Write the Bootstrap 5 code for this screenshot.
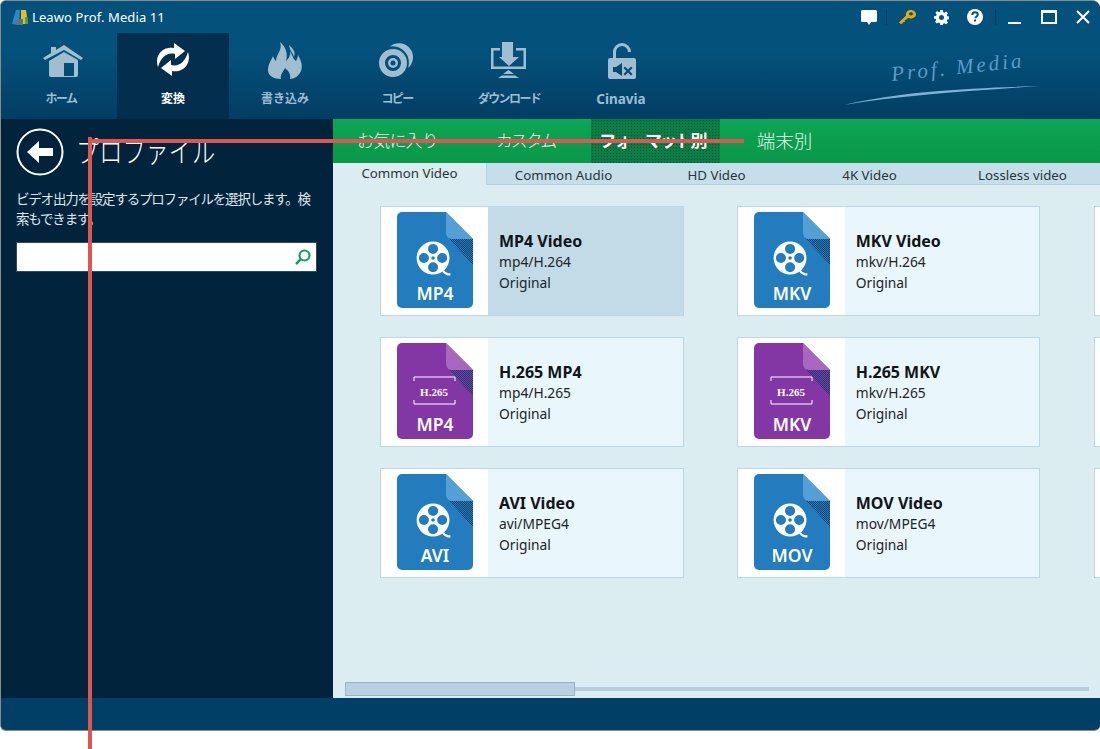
<!DOCTYPE html>
<html lang="ja">
<head>
  <meta charset="UTF-8">
  <meta name="viewport" content="width=device-width, initial-scale=1.0">
  <title>Leawo Prof. Media 11</title>
  <link href="https://cdn.jsdelivr.net/npm/bootstrap@5.3.3/dist/css/bootstrap.min.css" rel="stylesheet" crossorigin="anonymous">
  <script src="https://cdn.jsdelivr.net/npm/bootstrap@5.3.3/dist/js/bootstrap.bundle.min.js" crossorigin="anonymous"></script>
  <style>
    body {
      background: #fff;
      font-family: "Noto Sans", "Noto Sans CJK JP", sans-serif;
      overflow: hidden;
    }
    .app-window {
      width: 1100px;
      height: 731px;
      border: 1px solid #8a8a8a;
      border-right: 0;
      border-radius: 6px 8px 6px 6px;
      overflow: hidden;
      background: #023f66;
    }
    .app-head {
      height: 118px;
      background: linear-gradient(#04527c, #04527c 40%, #033d63);
      flex: none;
    }
    .title-row { height: 32px; padding-left: 10px; color: #fff; font-size: 13px; }
    .title-row > span { margin: 2px 0 0 3px; letter-spacing: .1px; }
    .win-tools { padding-right: 3px; }
    .tool-cell { width: 34px; }
    .tool-cell.min-btn { width: 30px; }
    .tool-cell.max-btn { width: 40px; }
    .tool-cell.close-btn { width: 28px; }
    .tool-sep { width: 1px; height: 16px; background: #033a5c; margin: 0 3px; }
    .tool-sep.first { margin-left: 0; }
    .main-nav { padding-left: 4px; height: 86px; }
    .nav-tile {
      width: 112px;
      height: 86px;
      padding-top: 9px;
      color: #9dbdd1;
      font-size: 12px;
      font-weight: 700;
    }
    .nav-tile svg { width: 44px; height: 40px; fill: #a1bed1; display: block; overflow: visible; }
    .nav-tile div { margin-top: 8px; line-height: 18px; }
    .nav-tile.on { background: #032e4e; color: #fff; }
    .nav-tile.on svg { fill: #fff; }
    .kana-tight { letter-spacing: -1.600px; }
    .latin-label { font-size: 13.500px; }
    .brand-mark { width: 210px; height: 86px; margin-left: auto; margin-right: 48px; }
    .app-body { height: 579px; flex: none; }
    .side-panel {
      width: 332px;
      background: #01233c;
      color: #dfe7ec;
      padding: 8px 16px 0 15px;
      flex: none;
    }
    .side-title { color: #fff; line-height: 50px; }
    .side-title span { display: inline-block; font-size: 29px; font-weight: 300; transform: scaleX(.8); transform-origin: left center; margin-left: -2px; white-space: nowrap; }
    .side-title svg { margin-right: 14px; flex: none; }
    .side-text { font-size: 13.500px; letter-spacing: -1.200px; line-height: 20px; margin: 12px 0 13px; }
    .search-box {
      height: 30px;
      background: #fff;
      border: 1px solid #33495b;
      padding-right: 5px;
    }
    .main-panel { width: 767px; background: #dcedf1; overflow: hidden; }
    .green-tabs {
      height: 44px;
      flex: none;
      background: linear-gradient(#0ca654, #0a974a);
    }
    .green-tab {
      width: 129px;
      color: #e4f5ea;
      font-size: 17px;
      font-weight: 300;
    }
    .green-tab.fav { letter-spacing: -.8px; }
    .green-tab.custom { letter-spacing: -2.200px; padding-right: 2px; }
    .green-tab.device { font-size: 18.500px; }
    .green-tab.on {
      background-color: #0a7d45;
      background-image: radial-gradient(#04533a 1px, transparent 1px);
      background-size: 3px 3px;
      color: #fff;
      font-weight: 700;
      letter-spacing: -1.800px;
      padding-right: 6px;
    }
    .sub-tabs { height: 22px; flex: none; background: #c5deea; border-bottom: 1px solid #b5d2df; }
    .sub-tab {
      width: 153px;
      color: #2b3438;
      font-size: 13.300px;
      line-height: 24px;
    }
    .sub-tab.on { width: 154px; background: #dcedf1; height: 22px; line-height: 21px; border-right: 1px solid #b5d2df; }
    .format-area { flex: 1; min-height: 0; padding: 21px 0 0 47px; overflow: hidden; }
    .format-grid {
      display: grid;
      grid-template-columns: repeat(3, 303.500px);
      grid-auto-rows: 110px;
      column-gap: 53.250px;
      row-gap: 21px;
    }
    .format-card {
      background: #e9f6fb;
      border: 1px solid #bdd8e4;
      color: #1c2429;
    }
    .format-card.picked { background: #c2dbe6; }
    .format-thumb {
      width: 107px;
      background: #fff;
      padding: 5px 0 0 16px;
      flex: none;
    }
    .format-info { padding-left: 11px; font-size: 13.800px; line-height: 20.500px; }
    .format-info strong { display: block; font-size: 16px; line-height: 24px; margin-bottom: -1px; color: #101518; }
    .scroll-strip { height: 17px; flex: none; padding: 0 11px 0 12px; margin-bottom: 1px; }
    .scroll-track { height: 4px; background: #b6cfdf; }
    .scroll-thumb { width: 230px; height: 14px; background: #bbcfe0; border: 1px solid #93b4ca; }
    .status-bar { height: 31px; flex: none; background: #023f66; }
    .note-h { position: absolute; left: 88px; top: 139px; width: 656px; height: 4px; background: #dc5750; }
    .note-v { position: absolute; left: 88px; top: 137px; width: 4px; height: 612px; background: #dc5750; }
  </style>
</head>
<body>
  <svg width="0" height="0" class="d-block position-absolute">
    <defs>
      <pattern id="dots" width="2" height="2" patternUnits="userSpaceOnUse"><rect width="1" height="1" fill="#16406e"/><rect x="1" y="1" width="1" height="1" fill="#16406e"/></pattern>
      <symbol id="reel" viewBox="0 0 46 46">
        <path fill-rule="evenodd" fill="#fff" d="M19 1a18 18 0 1 1 0 36 18 18 0 0 1 0-36zM19 3.500a5.500 5.500 0 1 0 0 11 5.500 5.500 0 0 0 0-11zM19 23.500a5.500 5.500 0 1 0 0 11 5.500 5.500 0 0 0 0-11zM9 13.500a5.500 5.500 0 1 0 0 11 5.500 5.500 0 0 0 0-11zM29 13.500a5.500 5.500 0 1 0 0 11 5.500 5.500 0 0 0 0-11zM19 17a2 2 0 1 0 0 4 2 2 0 0 0 0-4z"/>
        <path d="M30 33c2 3 4 4 8 4" fill="none" stroke="#fff" stroke-width="2.500"/>
      </symbol>
    </defs>
  </svg>

  <div class="app-window d-flex flex-column">
    <header class="app-head">
      <div class="title-row d-flex align-items-center">
        <svg width="18" height="17" viewBox="0 0 18 17"><path d="M1 15 5 1h4l-1 15z" fill="#2f86c6"/><path d="M10 1h5l2 14H10z" fill="#e2c11c"/><path d="M14 8l2.500 0 .5 7h-3z" fill="#4da04f"/><path d="M5 16l2-6h5v6z" fill="#5f7280"/></svg>
        <span>Leawo Prof. Media 11</span>
        <div class="win-tools ms-auto d-flex align-items-center">
          <div class="tool-cell d-flex justify-content-center">
            <svg width="16" height="15" viewBox="0 0 16 15"><path d="M1.500 0h13A1.500 1.500 0 0 1 16 1.500v9a1.500 1.500 0 0 1-1.500 1.500H10l-2 3-2-3H1.500A1.500 1.500 0 0 1 0 10.500v-9A1.500 1.500 0 0 1 1.500 0z" fill="#fff"/></svg>
          </div>
          <i class="tool-sep first"></i>
          <div class="tool-cell d-flex justify-content-center">
            <svg width="17" height="14" viewBox="0 0 17 14"><path fill-rule="evenodd" fill="#e0a911" d="M11.500 0C14.500 0 17 1.800 17 4.200s-2.500 4.300-5.500 4.300c-.9 0-1.700-.2-2.400-.5L5.500 10.800l.5 1.200-2 .3-.5 1.200-1.800.5L0 12.200 7 5.800C6.300 2.500 8.500 0 11.500 0zm.5 2.200c-1.100 0-2 .7-2 1.600s.9 1.600 2 1.600 2-.7 2-1.600-.9-1.600-2-1.600z"/></svg>
          </div>
          <div class="tool-cell d-flex justify-content-center">
            <svg width="15" height="15" viewBox="0 0 24 24"><path fill="#fff" fill-rule="evenodd" d="M10 0h4l.6 3.300 2.100.9 2.800-1.900 2.800 2.800-1.900 2.800.9 2.100 3.300.6v4l-3.300.6-.9 2.100 1.900 2.800-2.800 2.800-2.800-1.900-2.100.9L14 24h-4l-.6-3.300-2.100-.9-2.800 1.900-2.800-2.800 1.900-2.800-.9-2.100L0 14v-4l3.300-.6.900-2.100-1.900-2.800 2.800-2.800 2.800 1.900 2.100-.9zm2 8a4 4 0 1 0 0 8 4 4 0 0 0 0-8z"/></svg>
          </div>
          <div class="tool-cell d-flex justify-content-center">
            <svg width="16" height="16" viewBox="0 0 16 16"><circle cx="8" cy="8" r="8" fill="#fff"/><path d="M5.300 6c0-1.800 1.200-2.800 2.800-2.800s2.700 1 2.700 2.300c0 1.900-2.300 1.900-2.300 3.700" fill="none" stroke="#04527c" stroke-width="2"/><rect x="7" y="10.500" width="2" height="2" fill="#04527c"/></svg>
          </div>
          <i class="tool-sep"></i>
          <div class="tool-cell min-btn d-flex justify-content-center">
            <svg width="13" height="16" viewBox="0 0 13 16"><rect y="13" width="13" height="2" fill="#fff"/></svg>
          </div>
          <div class="tool-cell max-btn d-flex justify-content-center">
            <svg width="16" height="14" viewBox="0 0 16 14"><path fill="#fff" fill-rule="evenodd" d="M0 0h16v14H0zM2 3v9h12V3z"/></svg>
          </div>
          <div class="tool-cell close-btn d-flex justify-content-center">
            <svg width="14" height="14" viewBox="0 0 14 14"><path d="M1 1l12 12M13 1 1 13" stroke="#fff" stroke-width="2"/></svg>
          </div>
        </div>
      </div>
      <nav class="main-nav d-flex">
        <div class="nav-tile text-center d-flex flex-column align-items-center">
          <svg viewBox="0 0 44 40"><path d="M4 16 25 3l19 13-2 2L25 8 6 18z"/><path d="M12 5h5v4l-5 3z"/><path fill-rule="evenodd" d="M10 19 25 10l14 8v15a2 2 0 0 1-2 2H12a2 2 0 0 1-2-2zM25 21v13h10V21z"/></svg>
          <div class="kana-tight">ホーム</div>
        </div>
        <div class="nav-tile on text-center d-flex flex-column align-items-center">
          <svg viewBox="0 0 44 40"><path d="M7 25C3 13 12 4 23 6V1l11 8-10 8v-5C16 10 10 15 7 25zM37 10c4 12-5 21-16 19v5L10 26l10-8v5c8 2 14-3 17-13z"/></svg>
          <div>変換</div>
        </div>
        <div class="nav-tile text-center d-flex flex-column align-items-center">
          <svg viewBox="0 0 44 40"><path d="M5 28C5 22 8 19 10 14c1 3 2 4 3 5C13 12 20 8 17 0c6 5 8 12 6 19 2-2 5-5 4-10 3 6 4 9 6 10 1-2 2-4 2-6 3 5 5 11 3 16-2 5-7 8-11 8 1-4-1-8-5-11-2 4-5 7-4 11C11 37 5 34 5 28z"/><path d="M26 3c3 3 7 6 5 12-1-4-4-6-5-12z"/></svg>
          <div>書き込み</div>
        </div>
        <div class="nav-tile text-center d-flex flex-column align-items-center">
          <svg viewBox="0 0 44 40"><path d="M15 4.500A14 14 0 0 1 33 26 16.300 16.300 0 0 0 15 4.500z"/><path fill-rule="evenodd" d="M18 7a14 14 0 1 1 0 28 14 14 0 0 1 0-28zm0 6a8 8 0 1 0 0 16 8 8 0 0 0 0-16zm0 3a5 5 0 1 1 0 10 5 5 0 0 1 0-10zm0 2.500a2.500 2.500 0 1 0 0 5 2.500 2.500 0 0 0 0-5z"/></svg>
          <div class="kana-tight">コピー</div>
        </div>
        <div class="nav-tile text-center d-flex flex-column align-items-center">
          <svg viewBox="0 0 44 40"><path d="M15 0h11v15h6l-10 9-10-9h3z"/><path d="M13 6H4v21h35V6H29v2.500h7.500v16h-30v-16H13z"/><path d="M21.500 28l5.500 4H16zM11 36l4-2.500h13l4 2.500z"/></svg>
          <div class="kana-tight">ダウンロード</div>
        </div>
        <div class="nav-tile text-center d-flex flex-column align-items-center">
          <svg viewBox="0 0 44 40"><path d="M15.500 17V10a7.500 7.500 0 0 1 15 0" fill="none" stroke="#a1bed1" stroke-width="3"/><path fill-rule="evenodd" d="M11 16h24a2 2 0 0 1 2 2v17a2 2 0 0 1-2 2H11a2 2 0 0 1-2-2V18a2 2 0 0 1 2-2zM14 25v5h3l6 4V21l-6 4zM26 24.500l3 3 3-3 1.500 1.500-3 3 3 3-1.500 1.500-3-3-3 3-1.500-1.500 3-3-3-3z"/></svg>
          <div class="latin-label">Cinavia</div>
        </div>
        <svg class="brand-mark" viewBox="0 0 210 86">
          <text x="50" y="48" fill="#5d9bc7" font-family="'Liberation Serif',serif" font-style="italic" font-size="21" letter-spacing="3" transform="rotate(-6 50 48)">Prof. Media</text>
          <path d="M2 72C60 58 130 55 197 53 130 58 60 62 2 72z" fill="#7fb4da"/>
        </svg>
      </nav>
    </header>

    <div class="app-body d-flex">
      <aside class="side-panel">
        <div class="side-title d-flex align-items-center">
          <svg width="48" height="48" viewBox="0 0 48 48"><circle cx="24" cy="24" r="22.500" fill="none" stroke="#fff" stroke-width="2"/><path d="M11 24 23 13v7h14v8H23v7z" fill="#fff"/></svg>
          <span>プロファイル</span>
        </div>
        <p class="side-text">ビデオ出力を設定するプロファイルを選択します。検索もできます。</p>
        <div class="search-box d-flex align-items-center justify-content-end">
          <svg width="17" height="17" viewBox="0 0 17 17"><circle cx="10.500" cy="6.500" r="5" fill="none" stroke="#12a05a" stroke-width="2.200"/><path d="M7 10 2 15" stroke="#12a05a" stroke-width="2.500"/></svg>
        </div>
      </aside>
      <main class="main-panel d-flex flex-column">
        <div class="green-tabs d-flex">
          <div class="green-tab fav d-flex align-items-center justify-content-center">お気に入り</div>
          <div class="green-tab custom d-flex align-items-center justify-content-center">カスタム</div>
          <div class="green-tab on d-flex align-items-center justify-content-center">フォーマット別</div>
          <div class="green-tab device d-flex align-items-center justify-content-center">端末別</div>
        </div>
        <div class="sub-tabs d-flex">
          <div class="sub-tab on text-center">Common Video</div>
          <div class="sub-tab text-center">Common Audio</div>
          <div class="sub-tab text-center">HD Video</div>
          <div class="sub-tab text-center">4K Video</div>
          <div class="sub-tab text-center">Lossless video</div>
        </div>
        <div class="format-area">
          <div class="format-grid" id="formatGrid"></div>
        </div>
        <div class="scroll-strip position-relative d-flex align-items-center">
          <div class="scroll-track w-100"></div>
          <div class="scroll-thumb position-absolute"></div>
        </div>
      </main>
    </div>
    <div class="status-bar"></div>
  </div>

  <div class="note-h"></div>
  <div class="note-v"></div>

  <script>
    const formats = [
      ["MP4 Video", "mp4/H.264", "MP4", "blue", true],
      ["MKV Video", "mkv/H.264", "MKV", "blue"],
      ["", "", "", "none"],
      ["H.265 MP4", "mp4/H.265", "MP4", "purple"],
      ["H.265 MKV", "mkv/H.265", "MKV", "purple"],
      ["", "", "", "none"],
      ["AVI Video", "avi/MPEG4", "AVI", "blue"],
      ["MOV Video", "mov/MPEG4", "MOV", "blue"],
      ["", "", "", "none"]
    ];
    const palette = {
      blue: ["#237cbd", "#559fd7"],
      purple: ["#8237a5", "#a866bf"]
    };

    function fileIcon(label, color) {
      const [body, fold] = palette[color];
      const middle = color === "purple"
        ? `<path d="M17 38v-4h41v4M17 57v4h41v-4" fill="none" stroke="#fff" stroke-width="1"/>
           <text x="37" y="53" text-anchor="middle" fill="#fff" font-size="11" font-weight="700" font-family="'Liberation Serif',serif">H.265</text>`
        : `<use href="#reel" x="18.700" y="28.700" width="42" height="42"/>`;
      return `<svg width="76" height="96" viewBox="0 0 76 96">
        <path d="M5 0H49L76 27V91a5 5 0 0 1-5 5H5a5 5 0 0 1-5-5V5a5 5 0 0 1 5-5z" fill="${body}"/>
        <path d="M49 0 76 27H55a6 6 0 0 1-6-6z" fill="${fold}"/>
        <path d="M52 27H76V53z" fill="url(#dots)"/>
        ${middle}
        <text x="38" y="88" text-anchor="middle" fill="#fff" font-size="17.500" font-weight="600" font-family="'Noto Sans',sans-serif">${label}</text>
      </svg>`;
    }

    document.getElementById("formatGrid").innerHTML = formats.map(f => {
      if (f[3] === "none") return `<div class="format-card d-flex"><div class="format-thumb"></div></div>`;
      return `<div class="format-card d-flex ${f[4] ? "picked" : ""}">
        <div class="format-thumb">${fileIcon(f[2], f[3])}</div>
        <div class="format-info align-self-center"><strong>${f[0]}</strong>${f[1]}<br>Original</div>
      </div>`;
    }).join("");
  </script>
</body>
</html>
